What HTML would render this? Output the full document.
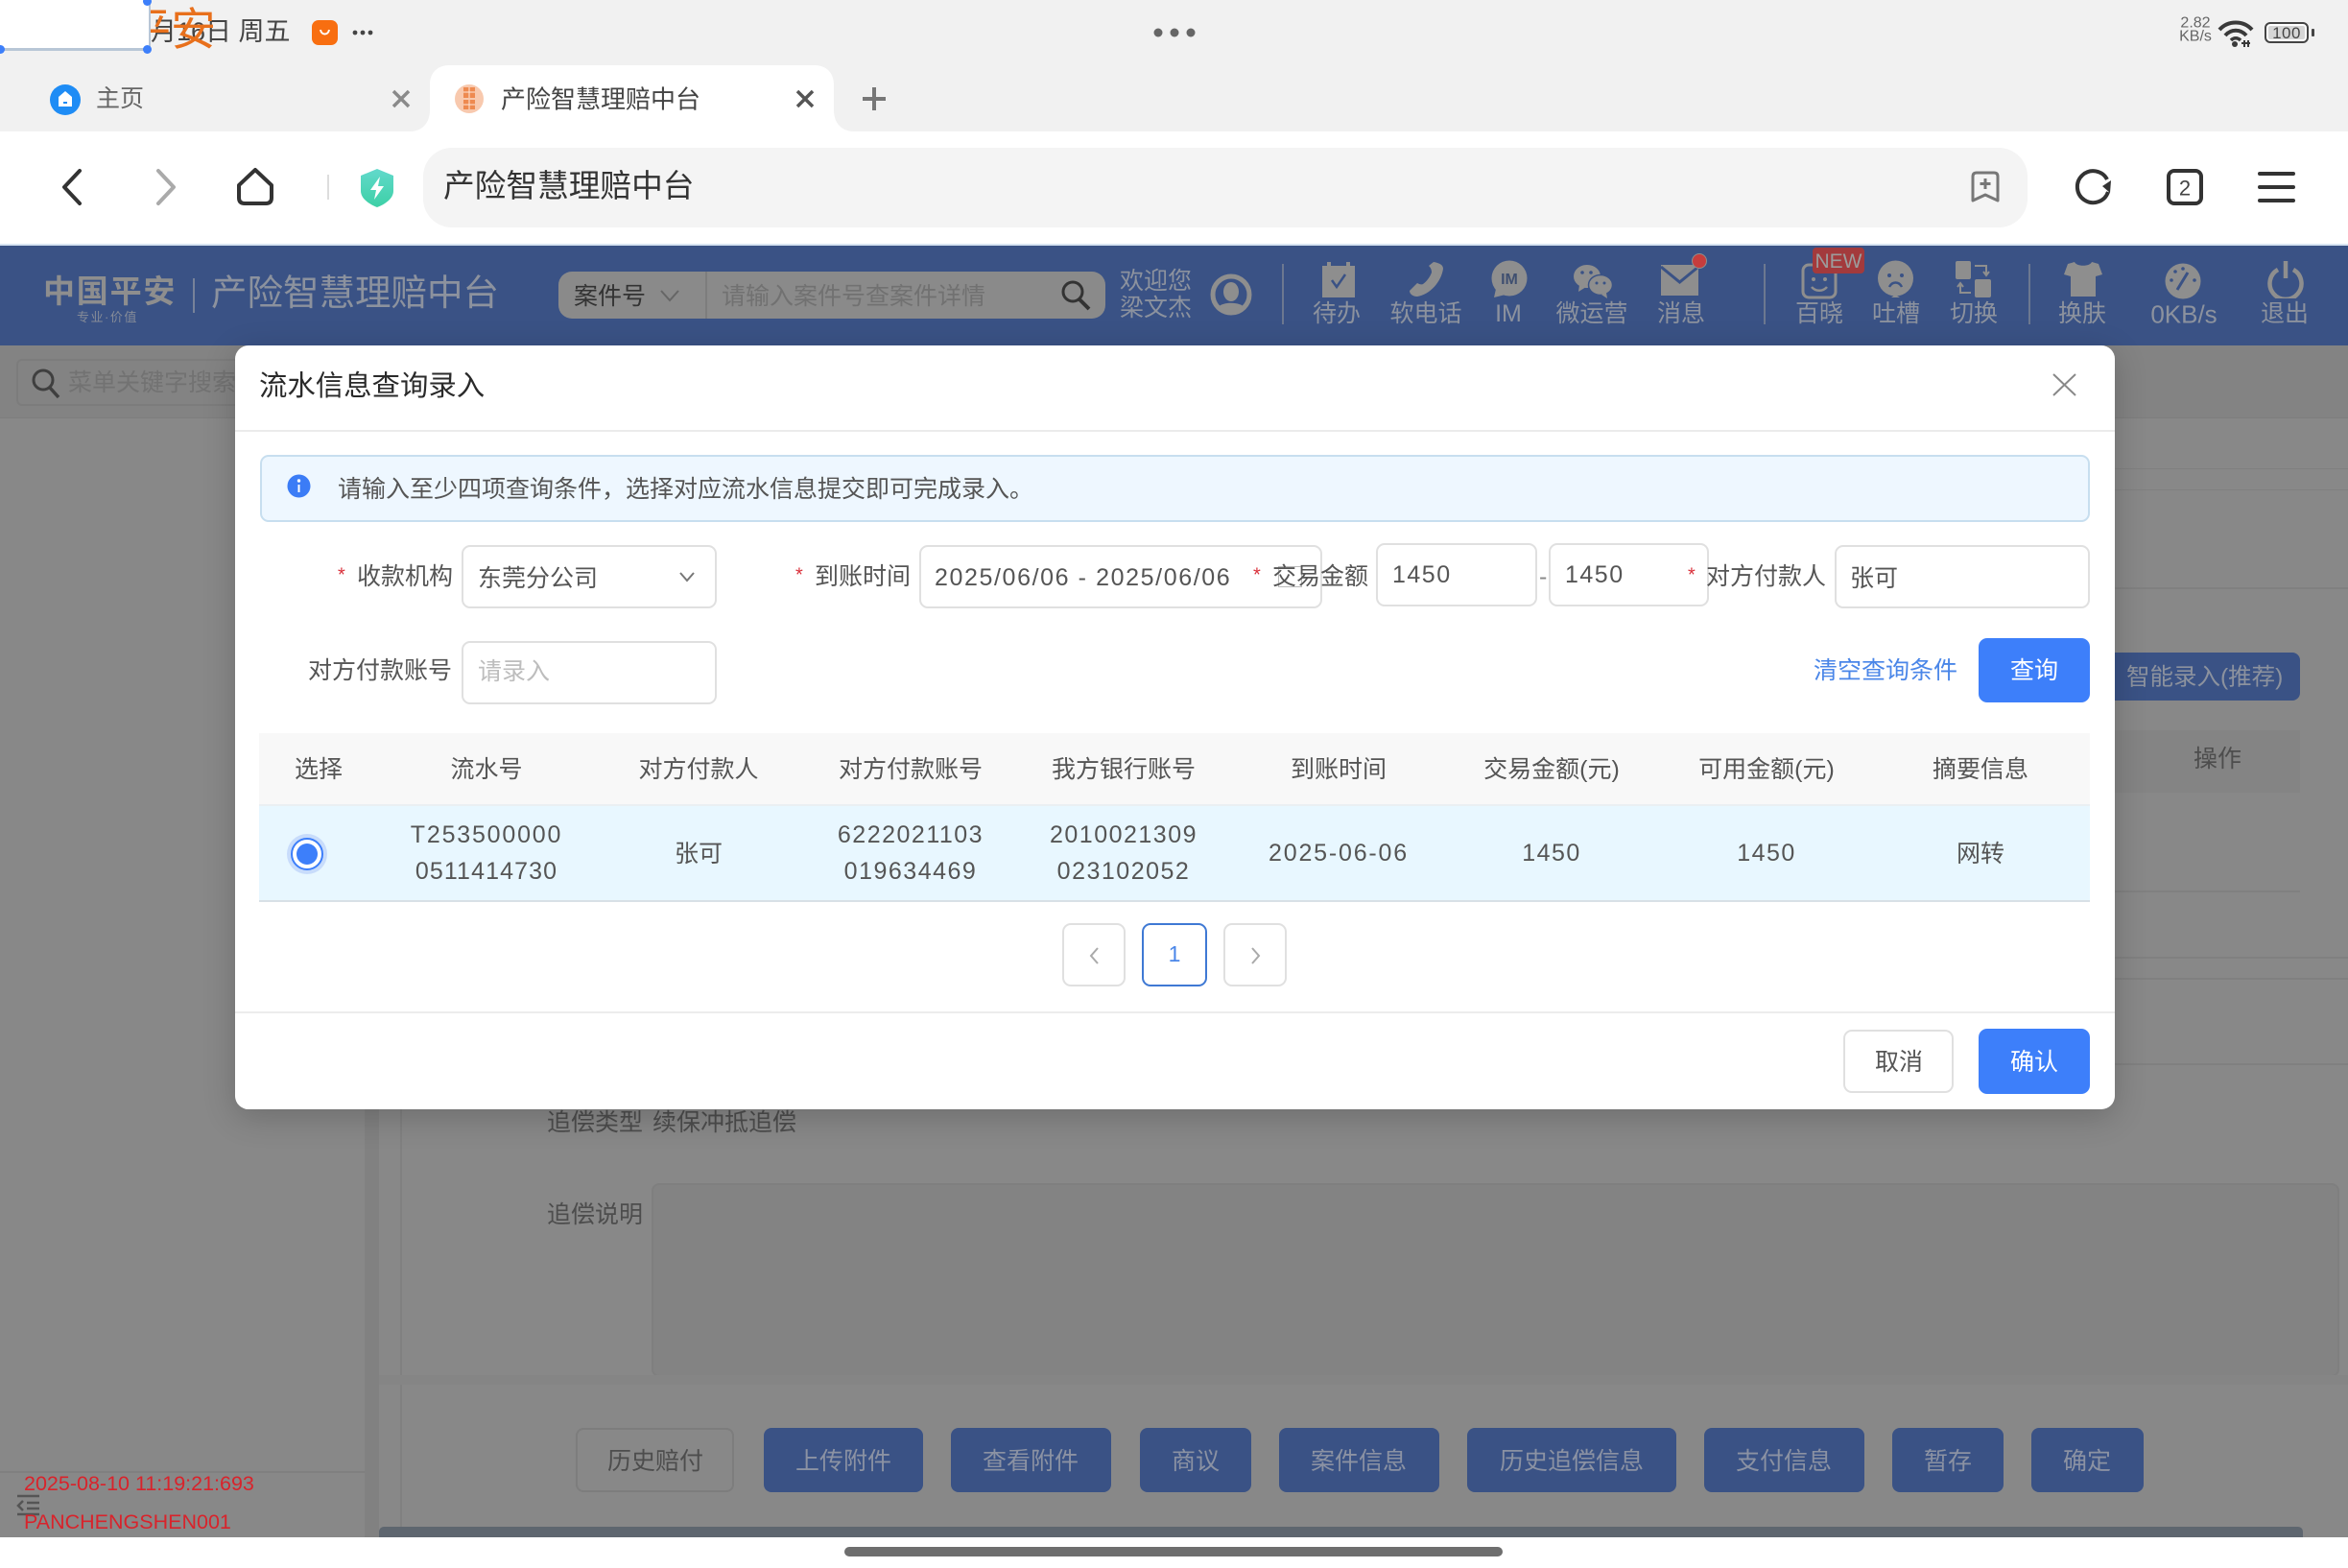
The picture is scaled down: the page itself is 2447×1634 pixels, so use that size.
<!DOCTYPE html>
<html lang="zh"><head><meta charset="utf-8"><title>产险智慧理赔中台</title>
<style>
html,body{margin:0;padding:0;background:#fff}
#p{position:relative;width:2447px;height:1634px;overflow:hidden;background:#fff;font-family:"Liberation Sans","Noto Sans CJK SC",sans-serif;font-size:25px;color:#555}
#p div,#p svg{position:absolute}
.l,.c{position:absolute;white-space:nowrap;line-height:1}
.l{transform:translateY(calc(-50% + 1.5px))}
.c{transform:translate(-50%,calc(-50% + 1.5px))}
.b{box-sizing:border-box;border:2px solid #e0e0e0;border-radius:9px;background:#fff}
.h{color:#8c929e}
.s{color:#d9303a;font-size:20px}
.n{letter-spacing:1.5px}
.bb{box-sizing:border-box;background:#3a5285;border-radius:8px;top:1488px;height:67px}
.bt{color:#8b92a3;top:1522px}
</style></head><body><div id="p">
<!-- top browser chrome -->
<div style="left:0;top:0;width:2447px;height:137px;background:#f1f1f1"></div>
<span class="l" style="left:142px;top:32px;font-size:27px;color:#444">8月16日 周五</span>
<span class="l" style="left:131px;top:29px;font-size:47px;color:#e8701c">平安</span>
<div style="left:0;top:-2px;width:155px;height:52px;background:#fff;border-bottom:3px solid #b8c6d6;border-right:2px solid #b8c6d6"></div>
<div style="left:-4px;top:47px;width:9px;height:9px;border-radius:50%;background:#3d7ffa"></div>
<div style="left:149px;top:47px;width:9px;height:9px;border-radius:50%;background:#3d7ffa"></div>
<div style="left:149px;top:-3px;width:9px;height:9px;border-radius:50%;background:#3d7ffa"></div>
<div style="left:325px;top:21px;width:27px;height:26px;border-radius:7px;background:#f86e10"></div>
<svg style="left:325px;top:21px" width="27" height="26"><path d="M9 10c1 6 8 6 9 0" fill="none" stroke="#fff" stroke-width="2"/></svg>
<svg style="left:365px;top:28px" width="28" height="12"><circle cx="5" cy="6" r="2.4" fill="#444"/><circle cx="13" cy="6" r="2.4" fill="#444"/><circle cx="21" cy="6" r="2.4" fill="#444"/></svg>
<svg style="left:1200px;top:26px" width="48" height="16"><circle cx="7" cy="8" r="4.5" fill="#666"/><circle cx="24" cy="8" r="4.5" fill="#666"/><circle cx="41" cy="8" r="4.5" fill="#666"/></svg>
<span class="c" style="left:2288px;top:23px;font-size:16px;color:#666">2.82</span>
<span class="c" style="left:2288px;top:37px;font-size:16px;color:#666">KB/s</span>
<svg style="left:2310px;top:20px" width="40" height="30"><path d="M3 11C12 1 28 1 37 11" fill="none" stroke="#3a3a3a" stroke-width="4"/><path d="M9 17C15 10 25 10 31 17" fill="none" stroke="#3a3a3a" stroke-width="4"/><path d="M15 22C18 19 22 19 25 22" fill="none" stroke="#3a3a3a" stroke-width="3.5"/><circle cx="19" cy="26" r="3" fill="#3a3a3a"/><path d="M29 22v7M33 22v7M35 25h-9" stroke="#3a3a3a" stroke-width="2" fill="none"/></svg>
<div style="left:2360px;top:23px;width:46px;height:22px;box-sizing:border-box;border:2.5px solid #444;border-radius:6px;background:#fff"></div>
<div style="left:2364px;top:27px;width:38px;height:14px;background:#d6d6d6;border-radius:2px"></div>
<span class="c" style="left:2383px;top:32.5px;font-size:17px;color:#444;letter-spacing:.5px">100</span>
<div style="left:2409px;top:30px;width:3px;height:8px;background:#444;border-radius:1px"></div>
<!-- tabs -->
<svg style="left:0;top:60px" width="960" height="80"><path d="M427 77C440 77 448 68 448 55V28C448 16 456 8 468 8H849C861 8 869 16 869 28V55C869 68 877 77 890 77Z" fill="#fff"/></svg>
<svg style="left:50px;top:86px" width="36" height="36"><circle cx="18" cy="18" r="16" fill="#1e8cf5"/><path d="M18 9L25 15V25H11V15Z" fill="#fff"/><path d="M16 21h4" stroke="#1e8cf5" stroke-width="2"/></svg>
<span class="l" style="left:100px;top:102px;color:#666">主页</span>
<svg style="left:406px;top:91px" width="24" height="24"><path d="M4 4L20 20M20 4L4 20" stroke="#8a8a8a" stroke-width="3.5"/></svg>
<div style="left:474px;top:88px;width:30px;height:30px;border-radius:50%;background:#f8c9ae"></div>
<svg style="left:474px;top:88px" width="30" height="30"><rect x="9" y="3" width="12" height="11" fill="#ee8a50"/><rect x="9" y="16" width="12" height="10" fill="#ee8a50"/><path d="M9 8h12M15 3v11M9 21h12M15 16v10" stroke="#fde6d8" stroke-width="1"/></svg>
<span class="l" style="left:522px;top:102px;font-size:26px;color:#444">产险智慧理赔中台</span>
<svg style="left:827px;top:91px" width="24" height="24"><path d="M4 4L20 20M20 4L4 20" stroke="#555" stroke-width="3.5"/></svg>
<svg style="left:896px;top:88px" width="30" height="30"><path d="M15 3V27M3 15H27" stroke="#777" stroke-width="4"/></svg>
<!-- toolbar -->
<svg style="left:60px;top:172px" width="30" height="46"><path d="M23 6L7 23L23 40" fill="none" stroke="#333" stroke-width="4" stroke-linecap="round" stroke-linejoin="round"/></svg>
<svg style="left:157px;top:172px" width="30" height="46"><path d="M8 6L24 23L8 40" fill="none" stroke="#aaa" stroke-width="4" stroke-linecap="round" stroke-linejoin="round"/></svg>
<svg style="left:244px;top:173px" width="44" height="43"><path d="M22 4L39 20V33Q39 39 33 39H11Q5 39 5 33V20Z" fill="none" stroke="#333" stroke-width="4" stroke-linejoin="round"/></svg>
<div style="left:341px;top:182px;width:2px;height:26px;background:#ddd"></div>
<svg style="left:373px;top:175px" width="40" height="42"><defs><linearGradient id="g" x1="0" y1="0" x2="0" y2="1"><stop offset="0" stop-color="#62d9cb"/><stop offset="1" stop-color="#3dd0a6"/></linearGradient></defs><path d="M20 1L37 8V24C37 32 28 38 20 41C12 38 3 32 3 24V8Z" fill="url(#g)"/><path d="M23 9L13 23H19L17 33L27 19H21Z" fill="#fff"/></svg>
<div style="left:441px;top:154px;width:1672px;height:83px;background:#f4f4f4;border-radius:30px"></div>
<span class="l" style="left:462px;top:193px;font-size:32.700px;color:#333">产险智慧理赔中台</span>
<svg style="left:2052px;top:177px" width="34" height="36"><path d="M8 3H26Q30 3 30 7V32L17 26L4 32V7Q4 3 8 3ZM17 9V20M11.5 14.5H22.5" fill="none" stroke="#777" stroke-width="3" stroke-linejoin="round"/></svg>
<svg style="left:2161px;top:174px" width="44" height="42"><path d="M36 26A16.500 16.500 0 1 1 35 13" fill="none" stroke="#333" stroke-width="4"/><path d="M30 20L39 14L38 27Z" fill="#333"/></svg>
<div style="left:2258px;top:176px;width:38px;height:38px;box-sizing:border-box;border:4px solid #333;border-radius:8px"></div>
<span class="c" style="left:2277px;top:194.5px;font-size:22px;color:#444">2</span>
<svg style="left:2353px;top:177px" width="40" height="36"><path d="M2 4H37M2 18H37M2 32H37" stroke="#333" stroke-width="4" stroke-linecap="round"/></svg>
<!-- dim app background -->
<div style="left:0;top:360px;width:2447px;height:1242px;background:#888"></div>
<div style="left:0;top:360px;width:2447px;height:75px;background:#838383"></div>
<div style="left:0;top:435px;width:2447px;height:1px;background:#7d7d7d"></div>
<div style="left:380px;top:436px;width:15px;height:1166px;background:#818181"></div>
<div style="left:0;top:1533px;width:380px;height:2px;background:#808080"></div>
<div style="left:17px;top:374px;width:300px;height:49px;box-sizing:border-box;border:2px solid #7c7c7c;border-radius:6px"></div>
<svg style="left:32px;top:382px" width="32" height="34"><circle cx="13" cy="14" r="10" fill="none" stroke="#3f3f3f" stroke-width="3"/><path d="M20 22L29 32" stroke="#3f3f3f" stroke-width="3.5"/></svg>
<span class="l" style="left:71px;top:398px;color:#727272">菜单关键字搜索</span>
<div style="left:2204px;top:488px;width:243px;height:1px;background:#808080"></div>
<div style="left:2204px;top:510px;width:243px;height:1px;background:#808080"></div>
<div style="left:2204px;top:612px;width:243px;height:2px;background:#808080"></div>
<div style="left:2204px;top:680px;width:193px;height:50px;background:#3a5285;border-radius:0 8px 8px 0"></div>
<span class="l h" style="left:2216px;top:705px;font-size:24.500px">智能录入(推荐)</span>
<div style="left:2204px;top:761px;width:193px;height:65px;background:#848484"></div>
<span class="c" style="left:2311px;top:790px;color:#4d4d4d">操作</span>
<div style="left:2204px;top:928px;width:193px;height:2px;background:#808080"></div>
<div style="left:2204px;top:997px;width:243px;height:2px;background:#808080"></div>
<div style="left:2204px;top:1019px;width:243px;height:2px;background:#808080"></div>
<div style="left:2204px;top:1108px;width:243px;height:2px;background:#808080"></div>
<div style="left:417px;top:1156px;width:2px;height:278px;background:#808080"></div>
<span class="l" style="left:570px;top:1169px;color:#4d4d4d">追偿类型</span>
<span class="l" style="left:680px;top:1169px;color:#4d4d4d">续保冲抵追偿</span>
<span class="l" style="left:570px;top:1265px;color:#4d4d4d">追偿说明</span>
<div style="left:679px;top:1233px;width:1759px;height:202px;box-sizing:border-box;background:#838383;border:2px solid #7f7f7f;border-radius:8px"></div>
<div style="left:395px;top:1433px;width:2052px;height:10px;background:#858585"></div>
<div style="left:417px;top:1443px;width:2px;height:150px;background:#808080"></div>
<div style="left:600px;top:1488px;width:165px;height:67px;box-sizing:border-box;border:2px solid #7d7d7d;border-radius:8px"></div>
<span class="c" style="left:683px;top:1522px;color:#4d4d4d">历史赔付</span>
<div class="bb" style="left:796px;width:166px"></div><span class="c bt" style="left:879px">上传附件</span>
<div class="bb" style="left:991px;width:167px"></div><span class="c bt" style="left:1074px">查看附件</span>
<div class="bb" style="left:1188px;width:116px"></div><span class="c bt" style="left:1246px">商议</span>
<div class="bb" style="left:1333px;width:167px"></div><span class="c bt" style="left:1416px">案件信息</span>
<div class="bb" style="left:1529px;width:218px"></div><span class="c bt" style="left:1638px">历史追偿信息</span>
<div class="bb" style="left:1776px;width:167px"></div><span class="c bt" style="left:1859px">支付信息</span>
<div class="bb" style="left:1972px;width:116px"></div><span class="c bt" style="left:2030px">暂存</span>
<div class="bb" style="left:2117px;width:117px"></div><span class="c bt" style="left:2175px">确定</span>
<div style="left:395px;top:1591px;width:2005px;height:11px;background:#5e666f;border-radius:5px 5px 0 0"></div>
<span class="l" style="left:25px;top:1544.500px;font-size:21.500px;color:#d9232b">2025-08-10 11:19:21:693</span>
<svg style="left:17px;top:1557px" width="26" height="24"><path d="M1 2H24M11 9H24M11 15H24M1 21H24" stroke="#555" stroke-width="2.500"/><path d="M7 7L2 12L7 17" fill="none" stroke="#555" stroke-width="2.500"/></svg>
<span class="l" style="left:25px;top:1585px;font-size:21.500px;color:#d9232b">PANCHENGSHEN001</span>
<div style="left:880px;top:1612px;width:686px;height:10px;background:#6e6e6e;border-radius:5px"></div>
<!-- header -->
<div style="left:0;top:254px;width:2447px;height:2px;background:#d7e4f2"></div>
<div style="left:0;top:256px;width:2447px;height:104px;background:#3a5285"></div>
<span class="l" style="left:45px;top:302px;font-size:33px;font-weight:700;color:#8e8e8e;letter-spacing:1.800px">中国平安</span>
<span class="l" style="left:80px;top:329px;font-size:13px;color:#858b98;letter-spacing:1.500px">专业·价值</span>
<div style="left:201px;top:290px;width:2px;height:36px;background:#77829a"></div>
<span class="l h" style="left:220px;top:304px;font-size:37.500px">产险智慧理赔中台</span>
<div style="left:582px;top:283px;width:570px;height:49px;background:#8a8a8a;border-radius:14px"></div>
<div style="left:735px;top:283px;width:2px;height:49px;background:#7d7d7d"></div>
<span class="l" style="left:598px;top:308px;color:#333">案件号</span>
<svg style="left:686px;top:300px" width="24" height="16"><path d="M3 3L12 13L21 3" fill="none" stroke="#666" stroke-width="2"/></svg>
<span class="l" style="left:752px;top:307.500px;color:#717171">请输入案件号查案件详情</span>
<svg style="left:1104px;top:290px" width="34" height="34"><circle cx="14" cy="14" r="10" fill="none" stroke="#333" stroke-width="3"/><path d="M21 22L31 32" stroke="#333" stroke-width="4"/></svg>
<span class="l h" style="left:1167px;top:291.500px">欢迎您</span>
<span class="l h" style="left:1167px;top:320px">梁文杰</span>
<svg style="left:1261px;top:285px" width="44" height="44"><circle cx="22" cy="22" r="19" fill="none" stroke="#8e8e8e" stroke-width="5"/><ellipse cx="22" cy="19" rx="8" ry="10" fill="#8e8e8e"/><path d="M8 36C11 29 33 29 36 36L28 41H16Z" fill="#8e8e8e"/></svg>
<div style="left:1336px;top:275px;width:2px;height:63px;background:#6c7890"></div>
<div style="left:1838px;top:275px;width:2px;height:63px;background:#6c7890"></div>
<div style="left:2114px;top:275px;width:2px;height:63px;background:#6c7890"></div>
<svg style="left:1377px;top:272px" width="36" height="38"><rect x="1" y="5" width="34" height="33" fill="#8e8e8e"/><rect x="6" y="1" width="4" height="7" fill="#8e8e8e"/><rect x="26" y="1" width="4" height="7" fill="#8e8e8e"/><path d="M11 20L16 27L25 14" fill="none" stroke="#3a5285" stroke-width="2.500"/></svg>
<svg style="left:1468px;top:272px" width="38" height="38"><path d="M26 1C32 2 36 4 36 8C34 22 22 35 9 37C4 37 1 34 1 31L9 23C11 24 13 25 15 24C19 21 22 17 24 12C24 9 23 7 21 5Z" fill="#8e8e8e"/></svg>
<svg style="left:1553px;top:271px" width="40" height="40"><ellipse cx="20" cy="19" rx="18.500" ry="18.500" fill="#8e8e8e"/><path d="M6 30L4 39L16 36Z" fill="#8e8e8e"/><text x="20" y="25" text-anchor="middle" font-size="16" font-weight="700" fill="#3f4f70" font-family="Liberation Sans,sans-serif">IM</text></svg>
<svg style="left:1639px;top:274px" width="42" height="38"><ellipse cx="15" cy="14" rx="14" ry="12" fill="#8e8e8e"/><path d="M7 23L6 30L14 25Z" fill="#8e8e8e"/><ellipse cx="29" cy="23" rx="12.500" ry="10.500" fill="#8e8e8e" stroke="#3a5285" stroke-width="1.500"/><path d="M35 31L36 37L30 33Z" fill="#8e8e8e"/><circle cx="10" cy="10" r="1.800" fill="#3a5285"/><circle cx="19" cy="10" r="1.800" fill="#3a5285"/><circle cx="25" cy="21" r="1.500" fill="#3a5285"/><circle cx="33" cy="21" r="1.500" fill="#3a5285"/></svg>
<svg style="left:1731px;top:276px" width="40" height="34"><rect width="39" height="32" fill="#8e8e8e"/><path d="M0 2L19.500 18L39 2" fill="none" stroke="#3a5285" stroke-width="3"/></svg>
<div style="left:1763px;top:264px;width:16px;height:16px;box-sizing:border-box;border-radius:50%;background:#c63d3d;border:1.500px solid #8e8e8e"></div>
<svg style="left:1877px;top:272px" width="38" height="40"><rect x="2" y="4" width="34" height="34" rx="6" fill="none" stroke="#8e8e8e" stroke-width="3"/><circle cx="13" cy="19" r="2" fill="#8e8e8e"/><circle cx="25" cy="19" r="2" fill="#8e8e8e"/><path d="M11 27C15 32 23 32 27 27" fill="none" stroke="#8e8e8e" stroke-width="2.500"/></svg>
<div style="left:1889px;top:258px;width:54px;height:27px;background:#a33a3c;border-radius:4px"></div>
<span class="c" style="left:1916px;top:270.500px;font-size:21px;color:#9c9c9c">NEW</span>
<svg style="left:1956px;top:271px" width="40" height="40"><circle cx="19.500" cy="19" r="18.500" fill="#8e8e8e"/><path d="M19 36L15 39H24Z" fill="#8e8e8e"/><circle cx="13" cy="16" r="2" fill="#3a5285"/><circle cx="26" cy="16" r="2" fill="#3a5285"/><path d="M13 28C16 22 23 22 26 28" fill="none" stroke="#3a5285" stroke-width="2.500"/></svg>
<svg style="left:2037px;top:271px" width="40" height="40"><rect x="1" y="1" width="16" height="19" rx="2" fill="#8e8e8e"/><rect x="21" y="20" width="17" height="19" rx="2" fill="#8e8e8e"/><path d="M21 6H33V15M30 12L33 16L36 12M17 34H6V25M3 28L6 24L9 28" fill="none" stroke="#8e8e8e" stroke-width="2"/></svg>
<svg style="left:2151px;top:272px" width="40" height="37"><path d="M11 1L4 3L0 14L7 16V37H33V16L40 14L36 3L29 1C27 6 13 6 11 1Z" fill="#8e8e8e"/></svg>
<svg style="left:2255px;top:274px" width="41" height="38"><circle cx="20" cy="19" r="18.500" fill="#8e8e8e"/><path d="M14 28L25 10" stroke="#3a5285" stroke-width="3"/><circle cx="8" cy="18" r="1.800" fill="#3a5285"/><circle cx="12" cy="9" r="1.800" fill="#3a5285"/><circle cx="20" cy="6" r="1.800" fill="#3a5285"/><circle cx="32" cy="18" r="1.800" fill="#3a5285"/></svg>
<svg style="left:2363px;top:271px" width="38" height="40"><path d="M11 10A16.500 16.500 0 1 0 27 10" fill="none" stroke="#8e8e8e" stroke-width="4.500"/><path d="M19 1V19" stroke="#8e8e8e" stroke-width="4.500"/></svg>
<span class="c h" style="left:1393px;top:326px">待办</span>
<span class="c h" style="left:1486px;top:326px">软电话</span>
<span class="c h" style="left:1572px;top:326px">IM</span>
<span class="c h" style="left:1659px;top:326px">微运营</span>
<span class="c h" style="left:1752px;top:326px">消息</span>
<span class="c h" style="left:1896px;top:326px">百晓</span>
<span class="c h" style="left:1976px;top:326px">吐槽</span>
<span class="c h" style="left:2057px;top:326px">切换</span>
<span class="c h" style="left:2170px;top:326px">换肤</span>
<span class="c h" style="left:2276px;top:326px;font-size:26px">0KB/s</span>
<span class="c h" style="left:2381px;top:326px">退出</span>
<!-- modal -->
<div style="left:245px;top:360px;width:1959px;height:796px;background:#fff;border-radius:14px;box-shadow:0 8px 34px rgba(0,0,0,.2)"></div>
<span class="l" style="left:270px;top:401px;font-size:29.400px;color:#2a2a2a">流水信息查询录入</span>
<svg style="left:2137px;top:387px" width="29" height="28"><path d="M3 3L26 25M26 3L3 25" stroke="#888" stroke-width="2"/></svg>
<div style="left:245px;top:448px;width:1959px;height:2px;background:#ebebeb"></div>
<div style="left:271px;top:474px;width:1907px;height:70px;box-sizing:border-box;background:#eef7ff;border:2px solid #c7deef;border-radius:9px"></div>
<svg style="left:299px;top:494px" width="25" height="25"><circle cx="12.500" cy="12.500" r="12" fill="#3b7cf6"/><circle cx="12.500" cy="7" r="1.700" fill="#fff"/><path d="M12.500 11V19" stroke="#fff" stroke-width="2"/></svg>
<span class="l" style="left:352px;top:509px;color:#555">请输入至少四项查询条件，选择对应流水信息提交即可完成录入。</span>
<!-- form -->
<span class="l s" style="left:352px;top:598px">*</span>
<span class="l" style="left:372px;top:600px">收款机构</span>
<div class="b" style="left:481px;top:568px;width:266px;height:66px"></div>
<span class="l" style="left:498px;top:601.500px">东莞分公司</span>
<svg style="left:706px;top:593px" width="20" height="16"><path d="M3 4L10 12L17 4" fill="none" stroke="#777" stroke-width="2"/></svg>
<span class="l s" style="left:829px;top:598px">*</span>
<span class="l" style="left:849px;top:600px">到账时间</span>
<div class="b" style="left:958px;top:568px;width:420px;height:66px"></div>
<span class="l" style="left:974px;top:600.500px;letter-spacing:1.600px">2025/06/06 - 2025/06/06</span>
<div style="left:1332px;top:590px;width:25px;height:22px;box-sizing:border-box;border:1px solid #bbb"></div>
<span class="l s" style="left:1306px;top:598px">*</span>
<span class="l" style="left:1326px;top:600px">交易金额</span>
<div class="b" style="left:1434px;top:566px;width:168px;height:66px"></div>
<span class="l n" style="left:1451px;top:598px">1450</span>
<span class="l" style="left:1604px;top:600px;color:#888">-</span>
<div class="b" style="left:1614px;top:566px;width:167px;height:66px"></div>
<span class="l n" style="left:1631px;top:598px">1450</span>
<span class="l s" style="left:1759px;top:598px">*</span>
<span class="l" style="left:1778px;top:600px">对方付款人</span>
<div class="b" style="left:1912px;top:568px;width:266px;height:66px"></div>
<span class="l" style="left:1928px;top:601.500px">张可</span>
<span class="l" style="left:321px;top:698px">对方付款账号</span>
<div class="b" style="left:481px;top:668px;width:266px;height:66px"></div>
<span class="l" style="left:498px;top:698.500px;color:#bdbdbd">请录入</span>
<span class="l" style="left:1890px;top:698px;color:#4a86e8">清空查询条件</span>
<div style="left:2062px;top:665px;width:116px;height:67px;background:#3d7ffa;border-radius:9px"></div>
<span class="c" style="left:2120px;top:698px;color:#fff">查询</span>
<!-- table -->
<div style="left:270px;top:764px;width:1908px;height:74px;background:#f8f8f8"></div>
<div style="left:270px;top:838px;width:1908px;height:102px;background:#e8f7ff;border-top:2px solid #eaeff2;border-bottom:2px solid #d8e0e6;box-sizing:border-box"></div>
<span class="c" style="left:332px;top:801px">选择</span>
<span class="c" style="left:507px;top:801px">流水号</span>
<span class="c" style="left:728px;top:801px">对方付款人</span>
<span class="c" style="left:949px;top:801px">对方付款账号</span>
<span class="c" style="left:1171px;top:801px">我方银行账号</span>
<span class="c" style="left:1395px;top:801px">到账时间</span>
<span class="c" style="left:1617px;top:801px">交易金额(元)</span>
<span class="c" style="left:1841px;top:801px">可用金额(元)</span>
<span class="c" style="left:2064px;top:801px">摘要信息</span>
<div style="left:299px;top:869px;width:42px;height:42px;border-radius:50%;background:#c8dcfb"></div>
<div style="left:303px;top:873px;width:34px;height:34px;box-sizing:border-box;border-radius:50%;background:#fff;border:2px solid #3d7ffa"></div>
<div style="left:309px;top:879px;width:22px;height:22px;border-radius:50%;background:#3d7ffa"></div>
<span class="c n" style="left:507px;top:868.500px;letter-spacing:1.800px">T253500000</span>
<span class="c n" style="left:507px;top:906.500px;letter-spacing:1.100px">0511414730</span>
<span class="c" style="left:728px;top:889px">张可</span>
<span class="c n" style="left:949px;top:868.500px">6222021103</span>
<span class="c n" style="left:949px;top:906.500px">019634469</span>
<span class="c n" style="left:1171px;top:868.500px">2010021309</span>
<span class="c n" style="left:1171px;top:906.500px">023102052</span>
<span class="c n" style="left:1395px;top:888px;letter-spacing:1.800px">2025-06-06</span>
<span class="c n" style="left:1617px;top:888px">1450</span>
<span class="c n" style="left:1841px;top:888px">1450</span>
<span class="c" style="left:2064px;top:889px">网转</span>
<!-- pagination -->
<div class="b" style="left:1107px;top:962px;width:66px;height:66px"></div>
<svg style="left:1132px;top:985px" width="18" height="22"><path d="M12 3L5 11L12 19" fill="none" stroke="#aaa" stroke-width="2"/></svg>
<div class="b" style="left:1190px;top:962px;width:68px;height:66px;border-color:#3f79d4"></div>
<span class="c" style="left:1224px;top:992.500px;font-size:23px;color:#4a86e8">1</span>
<div class="b" style="left:1275px;top:962px;width:66px;height:66px"></div>
<svg style="left:1299px;top:985px" width="18" height="22"><path d="M6 3L13 11L6 19" fill="none" stroke="#aaa" stroke-width="2"/></svg>
<div style="left:245px;top:1054px;width:1959px;height:2px;background:#ececec"></div>
<div class="b" style="left:1921px;top:1073px;width:115px;height:66px"></div>
<span class="c" style="left:1979px;top:1106px">取消</span>
<div style="left:2062px;top:1072px;width:116px;height:68px;background:#3d7ffa;border-radius:9px"></div>
<span class="c" style="left:2120px;top:1106px;color:#fff">确认</span>
</div></body></html>
